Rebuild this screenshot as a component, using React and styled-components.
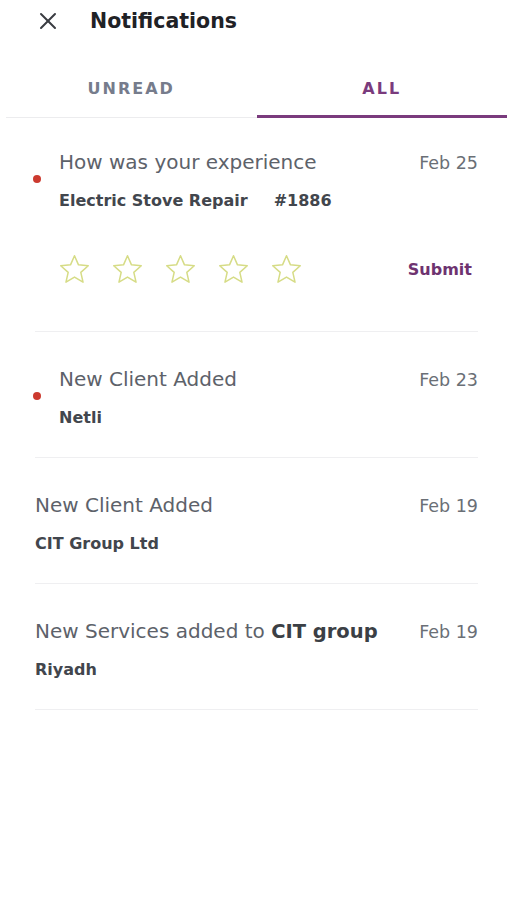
import React from 'react'
import styled, { createGlobalStyle } from 'styled-components'

const GlobalStyle = createGlobalStyle`
  html, body {
    margin: 0;
    padding: 0;
    background: #fff;
  }
  body {
    font-family: "DejaVu Sans", "Noto Sans", sans-serif;
  }
`

const Page = styled.div`
  width: 507px;
  min-height: 900px;
  background: #fff;
`

const Header = styled.div`
  display: flex;
  align-items: center;
  height: 42px;
  padding-left: 36px;
  gap: 30px;
`

const CloseButton = styled.button`
  display: flex;
  align-items: center;
  justify-content: center;
  width: 24px;
  height: 24px;
  padding: 0;
  border: 0;
  background: none;
`

const Title = styled.h1`
  margin: 0;
  font-size: 20.5px;
  font-weight: 700;
  color: #1f2226;
`

const Tabs = styled.div`
  display: flex;
  margin-top: 22px;
  margin-left: 6px;
  border-bottom: 1px solid #ececee;
`

const Tab = styled.div`
  flex: 1;
  height: 54px;
  display: flex;
  align-items: center;
  justify-content: center;
  padding-bottom: 2px;
  box-sizing: border-box;
  font-size: 16px;
  font-weight: 700;
  letter-spacing: 2px;
  color: ${({ active }) => (active ? '#7a3b7d' : '#767c8c')};
  border-bottom: 3px solid ${({ active }) => (active ? '#7a3b7d' : 'transparent')};
  margin-bottom: -1px;
`

const List = styled.div`
  padding: 0 29px 0 35px;
`

const Item = styled.div`
  display: flex;
  flex-direction: column;
  padding: ${({ first }) => (first ? '32px 0 45px' : '35px 0 29px')};
  border-bottom: 1px solid #efeff1;
`

const Row = styled.div`
  display: flex;
  align-items: center;
`

const Dot = styled.span`
  width: 8px;
  height: 8px;
  border-radius: 50%;
  background: #cc3a2f;
  margin: 0 18px 0 -2px;
  flex-shrink: 0;
  position: relative;
  top: -2px;
`

const Body = styled.div`
  flex: 1;
  display: flex;
  flex-direction: column;
  gap: 16px;
`

const TitleRow = styled.div`
  display: flex;
  justify-content: space-between;
  align-items: baseline;
  line-height: 24px;
`

const ItemTitle = styled.span`
  font-size: 20px;
  color: #5d626a;

  b {
    font-weight: 700;
    font-size: 19.5px;
    color: #3b3f45;
  }
`

const Date = styled.span`
  font-size: 17.5px;
  color: #6a6f76;
`

const Sub = styled.div`
  font-size: 16px;
  line-height: 20px;
  font-weight: 700;
  color: #42464d;
`

const Ticket = styled.span`
  margin-left: 26px;
`

const RatingRow = styled.div`
  display: flex;
  align-items: center;
  justify-content: space-between;
  margin-top: 42px;
  padding-left: 23px;
`

const Stars = styled.div`
  display: flex;
  gap: 20px;
`

const Submit = styled.button`
  border: 0;
  background: none;
  padding: 0 6px 0 0;
  font-family: inherit;
  font-size: 16px;
  font-weight: 700;
  color: #6e3370;
`

const Star = () => (
  <svg width="33" height="33" viewBox="0 0 24 24" fill="none" stroke="#d6dc86" strokeWidth="1.1" strokeLinejoin="round">
    <polygon points="12,2 14.9,8.6 22,9.3 16.6,14.1 18.2,21.2 12,17.5 5.8,21.2 7.4,14.1 2,9.3 9.1,8.6" />
  </svg>
)

const notifications = [
  { id: 2, unread: true, title: 'New Client Added', date: 'Feb 23', sub: 'Netli' },
  { id: 3, unread: false, title: 'New Client Added', date: 'Feb 19', sub: 'CIT Group Ltd' },
  { id: 4, unread: false, title: <>New Services added to <b>CIT group</b></>, date: 'Feb 19', sub: 'Riyadh' },
]

const Entry = ({ unread, title, date, sub }) => (
  <Item>
    <Row>
      {unread && <Dot />}
      <Body>
        <TitleRow>
          <ItemTitle>{title}</ItemTitle>
          <Date>{date}</Date>
        </TitleRow>
        <Sub>{sub}</Sub>
      </Body>
    </Row>
  </Item>
)

export default function App() {
  return (
    <Page>
      <GlobalStyle />
      <Header>
        <CloseButton aria-label="Close">
          <svg width="20" height="20" viewBox="0 0 20 20" stroke="#3a3d42" strokeWidth="2" strokeLinecap="round">
            <line x1="3" y1="3" x2="17" y2="17" />
            <line x1="17" y1="3" x2="3" y2="17" />
          </svg>
        </CloseButton>
        <Title>Notifications</Title>
      </Header>
      <Tabs>
        <Tab>UNREAD</Tab>
        <Tab active>ALL</Tab>
      </Tabs>
      <List>
        <Item first>
          <Row>
            <Dot />
            <Body>
              <TitleRow>
                <ItemTitle>How was your experience</ItemTitle>
                <Date>Feb 25</Date>
              </TitleRow>
              <Sub>
                Electric Stove Repair<Ticket>#1886</Ticket>
              </Sub>
            </Body>
          </Row>
          <RatingRow>
            <Stars>
              {[0, 1, 2, 3, 4].map((i) => <Star key={i} />)}
            </Stars>
            <Submit>Submit</Submit>
          </RatingRow>
        </Item>
        {notifications.map((n) => (
          <Entry key={n.id} {...n} />
        ))}
      </List>
    </Page>
  )
}
